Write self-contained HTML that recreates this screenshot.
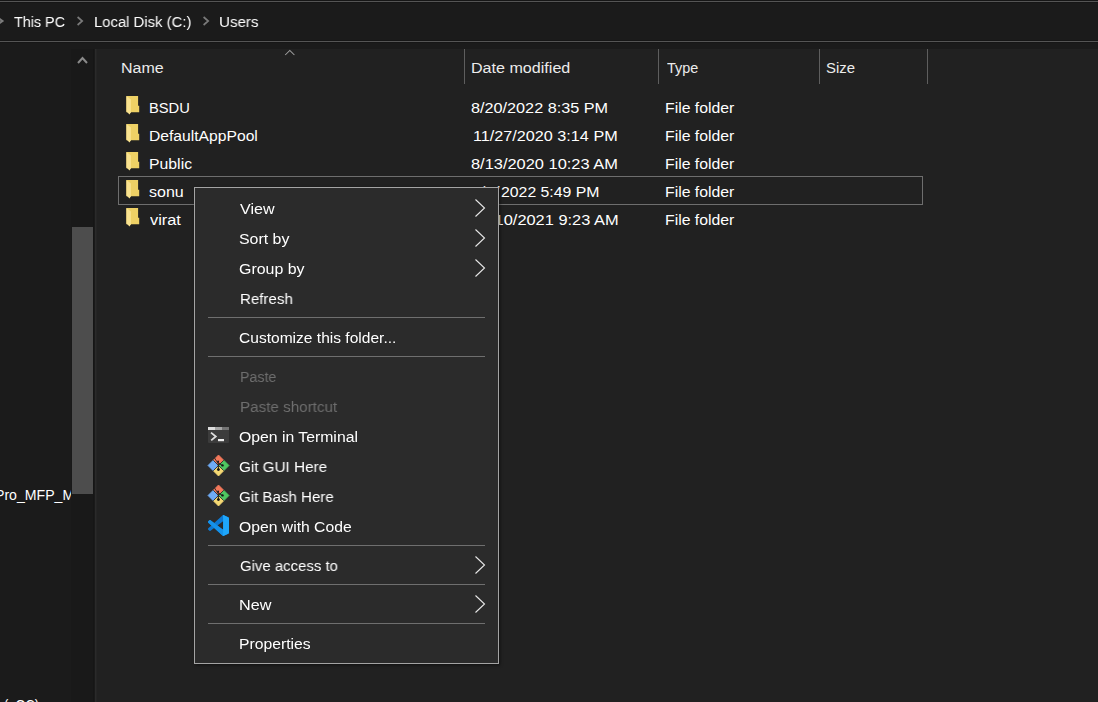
<!DOCTYPE html>
<html><head><meta charset="utf-8">
<style>
html,body{margin:0;padding:0;width:1098px;height:702px;overflow:hidden;background:#1b1b1b;}
*{box-sizing:border-box;}
.a{position:absolute;}
.t{position:absolute;font-family:"Liberation Sans",sans-serif;font-size:15.5px;line-height:20px;white-space:nowrap;color:#ffffff;transform-origin:0 0;}
.hl{position:absolute;left:0;width:1098px;height:1px;background:#555555;}
.hd{position:absolute;left:0;width:1098px;height:1px;background:#161616;}
.crumb{color:#ffffff;will-change:transform;}
.main{position:absolute;left:97px;top:49px;width:1001px;height:653px;background:#212121;}
.sep{position:absolute;width:1px;top:49px;height:35px;background:#5e5e5e;}
.hdr{color:#ececec;}
.row{color:#ffffff;}
.mi{color:#ffffff;will-change:transform;}
.menu{position:absolute;left:194px;top:187px;width:305px;height:477px;background:#2b2b2b;border:1px solid #a4a4a4;box-shadow:1px 1px 3px rgba(0,0,0,0.55);}
.msep{position:absolute;left:208px;width:277px;height:1px;background:#6f6f6f;}
.dis{color:#6e6e6e;}
</style></head><body>
<div class="hd" style="top:0px"></div><div class="hl" style="top:1px"></div><div class="hd" style="top:2px"></div>
<div class="hd" style="top:40px"></div><div class="hl" style="top:41px"></div><div class="hd" style="top:42px"></div>

<svg class="a" style="left:0;top:15px" width="6" height="12"><polyline points="-3,2 2.5,6 -3,10" fill="none" stroke="#7c7c7c" stroke-width="2"/></svg>
<svg class="a" style="left:76px;top:15px" width="10" height="12"><polyline points="1.6,2 6.2,6 1.6,10" fill="none" stroke="#7a7a7a" stroke-width="1.7"/></svg>
<svg class="a" style="left:202px;top:15px" width="10" height="12"><polyline points="1.6,2 6.2,6 1.6,10" fill="none" stroke="#7a7a7a" stroke-width="1.7"/></svg>

<div class="a" style="left:0;top:49px;width:71px;height:653px;overflow:hidden">
  <div class="t" style="left:-5.4px;top:436px;transform:scaleX(0.91)">Pro_MFP_M</div>
  <div class="t" style="left:4px;top:646px;transform:scaleX(0.83)">(oOC)</div>
</div>
<div class="a" style="left:71px;top:49px;width:22px;height:653px;background:#191919"></div><div class="a" style="left:93px;top:49px;width:1px;height:653px;background:#161616"></div><div class="a" style="left:94px;top:49px;width:1px;height:653px;background:#1a1a1a"></div>
<svg class="a" style="left:76px;top:55px" width="13" height="11"><polyline points="2,8 6.5,3 11,8" fill="none" stroke="#8a8a8a" stroke-width="2"/></svg>
<div class="a" style="left:72px;top:227px;width:21px;height:267px;background:#4d4d4d"></div>
<div class="a" style="left:95px;top:49px;width:1px;height:653px;background:#2a2a2a"></div><div class="a" style="left:96px;top:49px;width:1px;height:653px;background:#252525"></div>

<div class="main"></div>
<svg class="a" style="left:283px;top:47px" width="14" height="10"><polyline points="2.2,8 6.8,3.4 11.4,8" fill="none" stroke="#a0a0a0" stroke-width="1.05"/></svg>
<div class="sep" style="left:464px"></div>
<div class="sep" style="left:658px"></div>
<div class="sep" style="left:819px"></div>
<div class="sep" style="left:927px"></div>

<div class="a" style="left:118px;top:176px;width:805px;height:29px;border:1px solid #6e6e6e"></div>
<svg class="a" style="left:126px;top:96px" width="14" height="19"><polygon points="0.4,0 12.1,0 12.1,9.8 13.2,9.8 13.2,16.2 0.4,16.2" fill="#eed165"/><polygon points="0.4,0 4.9,3.4 4.9,16.2 3.6,18.6 0.4,15.4" fill="#f9e28f"/></svg>
<svg class="a" style="left:126px;top:124px" width="14" height="19"><polygon points="0.4,0 12.1,0 12.1,9.8 13.2,9.8 13.2,16.2 0.4,16.2" fill="#eed165"/><polygon points="0.4,0 4.9,3.4 4.9,16.2 3.6,18.6 0.4,15.4" fill="#f9e28f"/></svg>
<svg class="a" style="left:126px;top:152px" width="14" height="19"><polygon points="0.4,0 12.1,0 12.1,9.8 13.2,9.8 13.2,16.2 0.4,16.2" fill="#eed165"/><polygon points="0.4,0 4.9,3.4 4.9,16.2 3.6,18.6 0.4,15.4" fill="#f9e28f"/></svg>
<svg class="a" style="left:126px;top:180px" width="14" height="19"><polygon points="0.4,0 12.1,0 12.1,9.8 13.2,9.8 13.2,16.2 0.4,16.2" fill="#eed165"/><polygon points="0.4,0 4.9,3.4 4.9,16.2 3.6,18.6 0.4,15.4" fill="#f9e28f"/></svg>
<svg class="a" style="left:126px;top:208px" width="14" height="19"><polygon points="0.4,0 12.1,0 12.1,9.8 13.2,9.8 13.2,16.2 0.4,16.2" fill="#eed165"/><polygon points="0.4,0 4.9,3.4 4.9,16.2 3.6,18.6 0.4,15.4" fill="#f9e28f"/></svg>
<div class="t crumb" style="left:14.10px;top:12px;transform:scaleX(0.9255)">This PC</div>
<div class="t crumb" style="left:93.54px;top:12px;transform:scaleX(0.9580)">Local Disk (C:)</div>
<div class="t crumb" style="left:219.32px;top:12px;transform:scaleX(0.9769)">Users</div>
<div class="t hdr" style="left:120.77px;top:58px;transform:scaleX(1.0325)">Name</div>
<div class="t hdr" style="left:471.26px;top:58px;transform:scaleX(1.0383)">Date modified</div>
<div class="t hdr" style="left:667.00px;top:58px;transform:scaleX(0.9303)">Type</div>
<div class="t hdr" style="left:826.24px;top:58px;transform:scaleX(0.9621)">Size</div>
<div class="t row" style="left:149.35px;top:98px;transform:scaleX(0.9488)">BSDU</div>
<div class="t row" style="left:149.29px;top:126px;transform:scaleX(1.0104)">DefaultAppPool</div>
<div class="t row" style="left:149.28px;top:154px;transform:scaleX(1.0195)">Public</div>
<div class="t row" style="left:149.27px;top:182px;transform:scaleX(1.0344)">sonu</div>
<div class="t row" style="left:150.30px;top:210px;transform:scaleX(1.0552)">virat</div>
<div class="t row" style="left:471.25px;top:98px;transform:scaleX(1.0465)">8/20/2022 8:35 PM</div>
<div class="t row" style="left:472.66px;top:126px;transform:scaleX(1.0449)">11/27/2020 3:14 PM</div>
<div class="t row" style="left:471.24px;top:154px;transform:scaleX(1.0584)">8/13/2020 10:23 AM</div>
<div class="t row" style="left:471.19px;top:182px;transform:scaleX(1.1080)">8/9/</div>
<div class="t row" style="left:501.08px;top:182px;transform:scaleX(1.0202)">2022 5:49 PM</div>
<div class="t row" style="left:472.64px;top:210px;transform:scaleX(1.0581)">11/10/2021 9:23 AM</div>
<div class="t row" style="left:665.48px;top:98px;transform:scaleX(1.0194)">File folder</div>
<div class="t row" style="left:665.48px;top:126px;transform:scaleX(1.0194)">File folder</div>
<div class="t row" style="left:665.48px;top:154px;transform:scaleX(1.0194)">File folder</div>
<div class="t row" style="left:665.48px;top:182px;transform:scaleX(1.0194)">File folder</div>
<div class="t row" style="left:665.48px;top:210px;transform:scaleX(1.0194)">File folder</div>

<div class="menu"></div>
<div class="msep" style="top:317px"></div>
<div class="msep" style="top:356px"></div>
<div class="msep" style="top:545px"></div>
<div class="msep" style="top:584px"></div>
<div class="msep" style="top:623px"></div>
<div class="t mi" style="left:239.80px;top:199px;transform:scaleX(1.0364)">View</div>
<div class="t mi" style="left:239.37px;top:229px;transform:scaleX(1.0271)">Sort by</div>
<div class="t mi" style="left:239.17px;top:259px;transform:scaleX(1.0286)">Group by</div>
<div class="t mi" style="left:239.63px;top:289px;transform:scaleX(0.9717)">Refresh</div>
<div class="t mi" style="left:239.40px;top:328px;transform:scaleX(1.0039)">Customize this folder...</div>
<div class="t mi dis" style="left:239.88px;top:367px;transform:scaleX(0.9158)">Paste</div>
<div class="t mi dis" style="left:239.82px;top:397px;transform:scaleX(0.9806)">Paste shortcut</div>
<div class="t mi" style="left:239.28px;top:427px;transform:scaleX(1.0174)">Open in Terminal</div>
<div class="t mi" style="left:239.32px;top:457px;transform:scaleX(0.9830)">Git GUI Here</div>
<div class="t mi" style="left:239.33px;top:487px;transform:scaleX(0.9729)">Git Bash Here</div>
<div class="t mi" style="left:239.29px;top:517px;transform:scaleX(1.0136)">Open with Code</div>
<div class="t mi" style="left:239.54px;top:556px;transform:scaleX(0.9630)">Give access to</div>
<div class="t mi" style="left:239.46px;top:595px;transform:scaleX(1.0433)">New</div>
<div class="t mi" style="left:239.49px;top:634px;transform:scaleX(1.0145)">Properties</div>
<svg class="a" style="left:473px;top:198px" width="14" height="20"><polyline points="2.5,1.5 11.5,10 2.5,18.5" fill="none" stroke="#e8e8e8" stroke-width="1.1"/></svg>
<svg class="a" style="left:473px;top:228px" width="14" height="20"><polyline points="2.5,1.5 11.5,10 2.5,18.5" fill="none" stroke="#e8e8e8" stroke-width="1.1"/></svg>
<svg class="a" style="left:473px;top:258px" width="14" height="20"><polyline points="2.5,1.5 11.5,10 2.5,18.5" fill="none" stroke="#e8e8e8" stroke-width="1.1"/></svg>
<svg class="a" style="left:473px;top:555px" width="14" height="20"><polyline points="2.5,1.5 11.5,10 2.5,18.5" fill="none" stroke="#e8e8e8" stroke-width="1.1"/></svg>
<svg class="a" style="left:473px;top:594px" width="14" height="20"><polyline points="2.5,1.5 11.5,10 2.5,18.5" fill="none" stroke="#e8e8e8" stroke-width="1.1"/></svg>
<svg class="a" style="left:208px;top:427px" width="21" height="16"><rect x="0" y="0" width="21" height="16" rx="1" fill="#3c3c3c"/><rect x="0" y="0" width="7" height="3" fill="#dcdcdc"/><rect x="7" y="0" width="7" height="3" fill="#a6a6a6"/><rect x="14" y="0" width="7" height="3" fill="#747474"/><polyline points="3,5.6 7.8,9.5 3.2,13.4" fill="none" stroke="#dedede" stroke-width="1.8"/><rect x="10" y="12" width="6" height="2.2" fill="#eeeeee"/></svg>
<svg class="a" style="left:207px;top:454px" width="23" height="23" viewBox="0 0 23 23"><g stroke-linejoin="round"><polygon points="11.5,1 16.75,6.25 11.5,11.5 6.25,6.25" fill="#f4785a" stroke="#f4785a" stroke-width="0.8"/><polygon points="16.75,6.25 22,11.5 16.75,16.75 11.5,11.5" fill="#4fc862" stroke="#4fc862" stroke-width="0.8"/><polygon points="11.5,11.5 16.75,16.75 11.5,22 6.25,16.75" fill="#f5d873" stroke="#f5d873" stroke-width="0.8"/><polygon points="6.25,6.25 11.5,11.5 6.25,16.75 1,11.5" fill="#6fabf5" stroke="#6fabf5" stroke-width="0.8"/></g><line x1="6.25" y1="6.25" x2="16.75" y2="16.75" stroke="#2b2b2b" stroke-width="0.9"/><line x1="16.75" y1="6.25" x2="6.25" y2="16.75" stroke="#2b2b2b" stroke-width="0.9"/><line x1="7.4" y1="3.8" x2="11" y2="9.4" stroke="#2b2b2b" stroke-width="0.9"/><line x1="11.2" y1="7.2" x2="11.4" y2="15.4" stroke="#151515" stroke-width="1"/><line x1="12" y1="9.4" x2="15.4" y2="11.4" stroke="#151515" stroke-width="0.9"/><circle cx="11.4" cy="15.6" r="1.45" fill="#151515"/><circle cx="15.5" cy="11.4" r="1.2" fill="#151515"/><circle cx="11.1" cy="7.4" r="0.9" fill="#151515"/></svg>
<svg class="a" style="left:207px;top:484px" width="23" height="23" viewBox="0 0 23 23"><g stroke-linejoin="round"><polygon points="11.5,1 16.75,6.25 11.5,11.5 6.25,6.25" fill="#f4785a" stroke="#f4785a" stroke-width="0.8"/><polygon points="16.75,6.25 22,11.5 16.75,16.75 11.5,11.5" fill="#4fc862" stroke="#4fc862" stroke-width="0.8"/><polygon points="11.5,11.5 16.75,16.75 11.5,22 6.25,16.75" fill="#f5d873" stroke="#f5d873" stroke-width="0.8"/><polygon points="6.25,6.25 11.5,11.5 6.25,16.75 1,11.5" fill="#6fabf5" stroke="#6fabf5" stroke-width="0.8"/></g><line x1="6.25" y1="6.25" x2="16.75" y2="16.75" stroke="#2b2b2b" stroke-width="0.9"/><line x1="16.75" y1="6.25" x2="6.25" y2="16.75" stroke="#2b2b2b" stroke-width="0.9"/><line x1="7.4" y1="3.8" x2="11" y2="9.4" stroke="#2b2b2b" stroke-width="0.9"/><line x1="11.2" y1="7.2" x2="11.4" y2="15.4" stroke="#151515" stroke-width="1"/><line x1="12" y1="9.4" x2="15.4" y2="11.4" stroke="#151515" stroke-width="0.9"/><circle cx="11.4" cy="15.6" r="1.45" fill="#151515"/><circle cx="15.5" cy="11.4" r="1.2" fill="#151515"/><circle cx="11.1" cy="7.4" r="0.9" fill="#151515"/></svg>
<svg class="a" style="left:208px;top:515px" width="21" height="21" viewBox="0 0 100 100"><path d="M96.46 10.8L75.86.87C73.47-.28 70.62.2 68.75 2.08L29.3 38.04 12.12 25c-1.6-1.21-3.84-1.11-5.32.24L1.29 30.25c-1.81 1.65-1.81 4.5-.01 6.150L16.19 50 1.28 63.6c-1.8 1.65-1.8 4.5.01 6.15l5.51 5.01c1.48 1.35 3.72 1.45 5.32.24l17.18-13.04 39.45 35.96c1.87 1.88 4.72 2.36 7.11 1.21l20.6-9.93c2.16-1.04 3.54-3.23 3.54-5.63V16.43c0-2.4-1.38-4.59-3.54-5.63zM75.01 72.7L45.07 50l29.94-22.7v45.4z" fill="#0c78d2"/><path d="M12.12 25L75.01 72.7V99.6C73 100 70.6 99.8 68.75 97.92L1.28 36.4C-.52 34.75-.52 31.9 1.29 30.25L6.8 25.24C8.28 23.89 10.52 23.79 12.12 25Z" fill="#1592ea"/><path d="M75.86 .87L96.46 10.8C98.62 11.84 100 14.03 100 16.43v67.14c0 2.4-1.38 4.59-3.54 5.63L75.86 99.13c-1.3.63-2.8.8-4.2.5V.4c1.4-.3 2.9-.1 4.2.47z" fill="#1ea6fa"/></svg>

</body></html>
